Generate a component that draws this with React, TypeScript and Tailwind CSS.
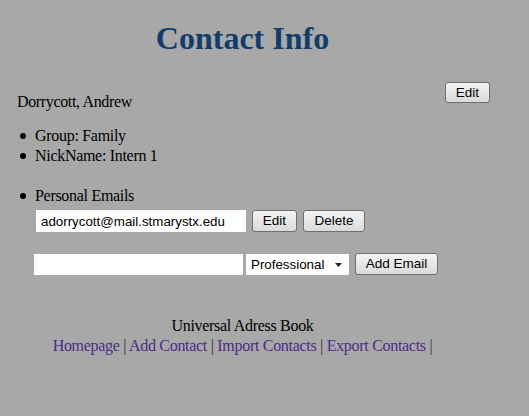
import React from "react";

const btn =
  "h-[21px] border border-[#707070] rounded-[3px] bg-gradient-to-b from-[#f4f4f4] to-[#dadada] text-[13.5px] text-black leading-none px-0 flex items-center justify-center";

export default function App() {
  const serif = { fontFamily: '"Liberation Serif", "Times New Roman", serif' };
  const sans = { fontFamily: '"Liberation Sans", Arial, sans-serif' };
  return (
    <div className="min-h-[416px] w-[529px] bg-[#a8a8a8] text-black" style={serif}>
      <div className="overflow-hidden">
        <h1 className="mt-[21px] w-[485px] text-center text-[32px] font-bold leading-[35px] text-[#123d6b]">
          Contact Info
        </h1>
        <div className="mt-[26px] flex items-start justify-between pr-[39px]">
          <div className="pl-[17px] pt-[11px] text-[16px] leading-[18px] tracking-[-0.35px]">Dorrycott, Andrew</div>
          <button className={btn + " w-[45px]"} style={sans}>
            Edit
          </button>
        </div>
        <ul className="mt-[15px] text-[16px] leading-[20px] tracking-[-0.3px]">
          <li className="flex items-center">
            <span className="ml-[20px] mr-[9px] h-[6px] w-[6px] rounded-full bg-black" />
            Group: Family
          </li>
          <li className="flex items-center">
            <span className="ml-[20px] mr-[9px] h-[6px] w-[6px] rounded-full bg-black" />
            NickName: Intern 1
          </li>
          <li className="h-[20px]" />
          <li className="flex items-center">
            <span className="ml-[20px] mr-[9px] h-[6px] w-[6px] rounded-full bg-black" />
            Personal Emails
          </li>
        </ul>
        <div className="mt-[4px] flex items-center pl-[36px]" style={sans}>
          <input
            readOnly
            value="adorrycott@mail.stmarystx.edu"
            className="h-[22px] w-[210px] bg-white px-[5px] text-[13.33px] text-black outline-none"
            style={sans}
          />
          <button className={btn + " ml-[6px] w-[45px] h-[22px]"} style={sans}>
            Edit
          </button>
          <button className={btn + " ml-[6px] w-[62px] h-[22px]"} style={sans}>
            Delete
          </button>
        </div>
        <div className="mt-[21px] flex items-center pl-[34px]" style={sans}>
          <input className="h-[21px] w-[209px] bg-white px-[4px] text-[13.33px] outline-none" style={sans} />
          <div className="relative ml-[3px] h-[21px] w-[103px] bg-white">
            <div className="pl-[5px] text-[13.33px] leading-[21px]">Professional</div>
            <svg className="absolute right-[7px] top-[9px]" width="7" height="4" viewBox="0 0 7 4">
              <path d="M0 0 H7 L3.5 4 Z" fill="#222" />
            </svg>
          </div>
          <button className={btn + " ml-[6px] w-[83px] h-[22px]"} style={sans}>
            Add Email
          </button>
        </div>
        <div className="mt-[41px] w-[485px] text-center text-[16px] leading-[20px] tracking-[-0.3px]">
          <div>Universal Adress Book</div>
          <div className="text-[#333]">
            <a className="text-[#4b2c8a]">Homepage</a> | <a className="text-[#4b2c8a]">Add Contact</a> |{" "}
            <a className="text-[#4b2c8a]">Import Contacts</a> | <a className="text-[#4b2c8a]">Export Contacts</a> |
          </div>
        </div>
      </div>
    </div>
  );
}
